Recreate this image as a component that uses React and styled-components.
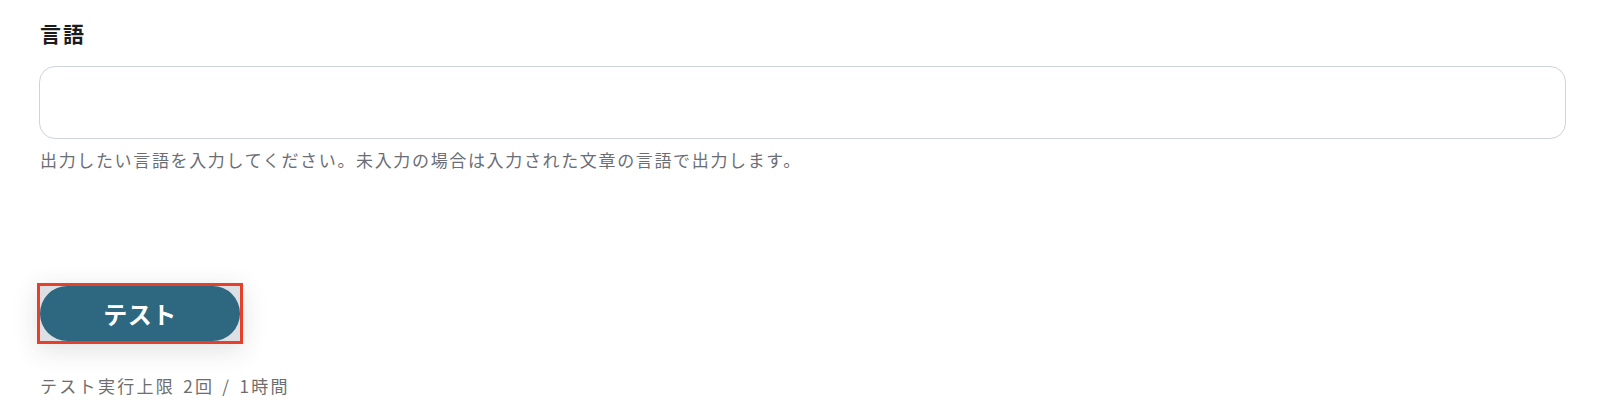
import styled, { createGlobalStyle } from 'styled-components';

const GlobalStyle = createGlobalStyle`
  html, body {
    margin: 0;
    padding: 0;
    background: #ffffff;
  }
  body {
    font-family: "Noto Sans CJK JP", "Noto Sans", sans-serif;
  }
`

const Page = styled.div`
  padding: 16px 34px 0 39px;
  display: flex;
  flex-direction: column;
`

const Field = styled.div`
  display: flex;
  flex-direction: column;
`

const Label = styled.label`
  font-size: 21px;
  font-weight: 700;
  color: #1c1c1c;
  line-height: 34px;
  padding-left: 1px;
  letter-spacing: 2px;
`

const TextInput = styled.input`
  box-sizing: border-box;
  margin-top: 16px;
  width: 100%;
  height: 73px;
  border: 1.5px solid #cfd3dc;
  border-radius: 16px;
  background: #ffffff;
  outline: none;
  padding: 0 18px;
  font-size: 17px;
  font-family: inherit;
`

const Help = styled.p`
  margin: 9px 0 0 1px;
  font-size: 17px;
  line-height: 24px;
  color: #6b6e75;
  letter-spacing: 1.65px;
`

const ButtonArea = styled.div`
  margin-top: 111px;
  display: flex;
`

const Highlight = styled.div`
  box-sizing: border-box;
  width: 206px;
  height: 61px;
  border: 3px solid #e6402a;
  background: #dcdfe3;
  display: flex;
  box-shadow: 0 6px 26px rgba(40, 50, 60, 0.14);
  margin-left: -2px;
`

const TestButton = styled.button`
  flex: 1;
  border: none;
  border-radius: 28px;
  background: #2d6780;
  color: #ffffff;
  font-family: inherit;
  font-size: 24px;
  font-weight: 700;
  letter-spacing: 0.5px;
  cursor: pointer;
  padding: 0;
`

const Limit = styled.div`
  margin-top: 30px;
  margin-left: 1px;
  font-size: 17px;
  line-height: 24px;
  color: #6e6e6e;
  letter-spacing: 2.3px;
  word-spacing: 2px;
`

export default function App() {
  return (
    <>
      <GlobalStyle />
      <Page>
        <Field>
          <Label>言語</Label>
          <TextInput type="text" />
          <Help>出力したい言語を入力してください。未入力の場合は入力された文章の言語で出力します。</Help>
        </Field>
        <ButtonArea>
          <Highlight>
            <TestButton>テスト</TestButton>
          </Highlight>
        </ButtonArea>
        <Limit>テスト実行上限 2回 / 1時間</Limit>
      </Page>
    </>
  );
}
